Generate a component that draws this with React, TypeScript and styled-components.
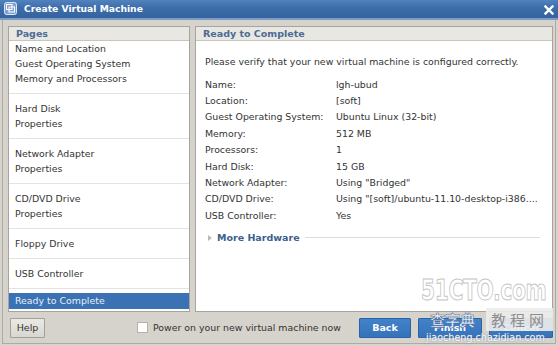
import React from "react";
import styled, { createGlobalStyle } from "styled-components";

const Global = createGlobalStyle`
  html, body { margin: 0; padding: 0; }
  body { width: 558px; height: 346px; overflow: hidden; background: #d6d3cc; }
  * { box-sizing: border-box; }
`;

const FONT = `"DejaVu Sans", Verdana, sans-serif`;

const Window = styled.div`
  position: relative;
  width: 558px;
  height: 346px;
  overflow: hidden;
  display: flex;
  flex-direction: column;
  background: #d6d3cc;
  font-family: ${FONT};
  font-size: 9.4px;
  color: #333;
`;

const TitleBar = styled.div`
  height: 20px;
  flex: none;
  display: flex;
  align-items: center;
  padding: 0 4px 1px 4px;
  background: linear-gradient(#5283be 0%, #3e6eab 40%, #34639f 100%);
  border-bottom: 2px solid #7d9cc4;
  color: #fff;
`;

const TitleText = styled.div`
  flex: 1;
  margin-left: 7px;
  font-weight: bold;
  font-size: 9.2px;
`;

const CloseBox = styled.div`
  width: 11px;
  height: 11px;
  display: flex;
  align-items: center;
  justify-content: center;
  margin-top: 2px;
`;

const Frame = styled.div`
  flex: 1;
  display: flex;
  flex-direction: column;
  margin: 0 2px 2px 2px;
  border: 1px solid #aeaba4;
  border-top: none;
  min-height: 0;
`;

const Main = styled.div`
  height: 292px;
  display: flex;
  gap: 5px;
  padding: 6px 2px 0 5px;
`;

const Panel = styled.div<{ $w?: number }>`
  ${(p) => (p.$w ? `width: ${p.$w}px;` : "flex: 1;")}
  display: flex;
  flex-direction: column;
  background: #fff;
  border: 1px solid #a7a49d;
`;

const PanelHeader = styled.div`
  height: 14px;
  flex: none;
  display: flex;
  align-items: center;
  padding: 0 7px;
  background: #e9e7e1;
  border-bottom: 1px solid #c8c5be;
  color: #4a6b96;
  font-weight: bold;
  font-size: 9.5px;
`;

const Group = styled.div<{ $first?: boolean; $last?: boolean }>`
  padding: ${(p) => (p.$first ? "0 0 7px" : p.$last ? "4px 0 0" : "7px 0")};
  border-bottom: ${(p) => (p.$last ? "none" : "1px solid #e3e3e3")};
  ${(p) => (p.$last ? "flex: 1;" : "")}
`;

const Item = styled.div<{ $selected?: boolean }>`
  height: ${(p) => (p.$selected ? 16 : 15)}px;
  line-height: ${(p) => (p.$selected ? 16 : 15)}px;
  padding-left: 6px;
  white-space: nowrap;
  background: ${(p) => (p.$selected ? "#3a72b4" : "transparent")};
  color: ${(p) => (p.$selected ? "#e6eef8" : "#333")};
`;

const Content = styled.div`
  padding: 13px 9px 0 9px;
`;

const Intro = styled.div`
  line-height: 16px;
  white-space: nowrap;
`;

const SummaryTable = styled.div`
  margin-top: 6px;
  display: grid;
  grid-template-columns: 131px 1fr;
  grid-auto-rows: 16.4px;
  align-items: center;
  white-space: nowrap;
`;

const Value = styled.div`
  overflow: hidden;
`;

const MoreRow = styled.div`
  margin-top: 7px;
  height: 14px;
  display: flex;
  align-items: center;
  gap: 5px;
  padding-left: 3px;
`;

const Arrow = styled.span`
  width: 0;
  height: 0;
  border-top: 3px solid transparent;
  border-bottom: 3px solid transparent;
  border-left: 4px solid #b9b9b9;
`;

const MoreLabel = styled.span`
  color: #3e5f8c;
  font-weight: bold;
  font-size: 9.5px;
`;

const Rule = styled.span`
  flex: 1;
  height: 1px;
  background: #dcdcdc;
  margin-right: 3px;
`;

const Footer = styled.div`
  flex: 1;
  display: flex;
  align-items: center;
  padding: 0 2px 0 7px;
`;

const Button = styled.button<{ $primary?: boolean; $w: number }>`
  width: ${(p) => p.$w}px;
  height: 20px;
  font-family: ${FONT};
  font-size: 9.5px;
  font-weight: ${(p) => (p.$primary ? "bold" : "normal")};
  color: ${(p) => (p.$primary ? "#fff" : "#333")};
  background: ${(p) =>
    p.$primary ? "linear-gradient(#4282c8, #3572ba)" : "linear-gradient(#ebe9e4, #d9d6cf)"};
  border: 1px solid ${(p) => (p.$primary ? "#2d62a3" : "#a3a099")};
  border-radius: 1px;
  padding: 0;
`;

const CheckLabel = styled.label`
  display: flex;
  align-items: center;
  gap: 5px;
  margin-left: 92px;
  white-space: nowrap;
`;

const Check = styled.span`
  width: 11px;
  height: 11px;
  background: #fff;
  border: 1px solid #b4b1aa;
`;

const Actions = styled.div`
  margin-left: auto;
  display: flex;
  gap: 7px;
`;

const Watermark = styled.div<{ $x: number; $y: number }>`
  position: absolute;
  left: ${(p) => p.$x}px;
  top: ${(p) => p.$y}px;
  pointer-events: none;
  white-space: nowrap;
  line-height: 1;
`;

const BigMark = styled.span`
  display: inline-block;
  font-family: "DejaVu Sans Condensed", "DejaVu Sans", sans-serif;
  font-weight: bold;
  font-size: 29px;
  letter-spacing: -0.5px;
  transform: scale(0.78, 1);
  transform-origin: left top;
  color: rgba(255, 255, 255, 0.85);
  -webkit-text-stroke: 1px rgba(175, 175, 175, 0.75);
`;

const CjkMark = styled.span<{ $box?: boolean }>`
  font-family: "Noto Sans CJK SC", sans-serif;
  font-size: 15px;
  font-weight: bold;
  color: ${(p) => (p.$box ? "#8d8d8d" : "rgba(255,255,255,0.92)")};
  ${(p) =>
    p.$box
      ? "background: rgba(235,235,235,0.92); padding: 1px 5px; letter-spacing: 4px; font-weight: normal;"
      : "-webkit-text-stroke: 0.6px #4a6ea0;"}
`;

const UrlMark = styled.span`
  font-family: "DejaVu Sans", sans-serif;
  font-size: 9.6px;
  color: rgba(255, 255, 255, 0.95);
  text-shadow: 0 0 2px #6d86a8;
`;

const VmIcon = () => (
  <svg width="13" height="13" viewBox="0 0 13 13">
    <rect x="0.5" y="0.5" width="12" height="12" rx="2" fill="#7fa3d0" stroke="#dfe9f5" />
    <rect x="2.5" y="2.5" width="5.5" height="5" fill="none" stroke="#fff" />
    <rect x="5" y="5" width="5.5" height="5" fill="none" stroke="#fff" />
  </svg>
);

const CloseIcon = () => (
  <svg width="10" height="10" viewBox="0 0 10 10">
    <path d="M1.5 1.5 L8.5 8.5 M8.5 1.5 L1.5 8.5" stroke="#fff" strokeWidth="2.4" strokeLinecap="square" />
  </svg>
);

const groups: string[][] = [
  ["Name and Location", "Guest Operating System", "Memory and Processors"],
  ["Hard Disk", "Properties"],
  ["Network Adapter", "Properties"],
  ["CD/DVD Drive", "Properties"],
  ["Floppy Drive"],
  ["USB Controller"],
];

const summary: [string, string][] = [
  ["Name:", "lgh-ubud"],
  ["Location:", "[soft]"],
  ["Guest Operating System:", "Ubuntu Linux (32-bit)"],
  ["Memory:", "512 MB"],
  ["Processors:", "1"],
  ["Hard Disk:", "15 GB"],
  ["Network Adapter:", 'Using "Bridged"'],
  ["CD/DVD Drive:", 'Using "[soft]/ubuntu-11.10-desktop-i386....'],
  ["USB Controller:", "Yes"],
];

export default function App() {
  return (
    <>
      <Global />
      <Window>
        <TitleBar>
          <VmIcon />
          <TitleText>Create Virtual Machine</TitleText>
          <CloseBox>
            <CloseIcon />
          </CloseBox>
        </TitleBar>
        <Frame>
          <Main>
            <Panel $w={182}>
              <PanelHeader>Pages</PanelHeader>
              {groups.map((g, i) => (
                <Group key={i} $first={i === 0}>
                  {g.map((t, j) => (
                    <Item key={j}>{t}</Item>
                  ))}
                </Group>
              ))}
              <Group $last>
                <Item $selected>Ready to Complete</Item>
              </Group>
            </Panel>
            <Panel>
              <PanelHeader>Ready to Complete</PanelHeader>
              <Content>
                <Intro>Please verify that your new virtual machine is configured correctly.</Intro>
                <SummaryTable>
                  {summary.map(([k, v]) => (
                    <React.Fragment key={k}>
                      <div>{k}</div>
                      <Value>{v}</Value>
                    </React.Fragment>
                  ))}
                </SummaryTable>
                <MoreRow>
                  <Arrow />
                  <MoreLabel>More Hardware</MoreLabel>
                  <Rule />
                </MoreRow>
              </Content>
            </Panel>
          </Main>
          <Footer>
            <Button $w={35}>Help</Button>
            <CheckLabel>
              <Check />
              Power on your new virtual machine now
            </CheckLabel>
            <Actions>
              <Button $primary $w={52}>Back</Button>
              <Button $primary $w={64}>Finish</Button>
              <Button $primary $w={64}>Cancel</Button>
            </Actions>
          </Footer>
        </Frame>
        <Watermark $x={421} $y={276}>
          <BigMark>51CTO.com</BigMark>
        </Watermark>
        <Watermark $x={430} $y={312}>
          <CjkMark>查字典</CjkMark>
        </Watermark>
        <Watermark $x={486} $y={312}>
          <CjkMark $box>教程网</CjkMark>
        </Watermark>
        <Watermark $x={426} $y={333}>
          <UrlMark>jiaocheng.chazidian.com</UrlMark>
        </Watermark>
      </Window>
    </>
  );
}
